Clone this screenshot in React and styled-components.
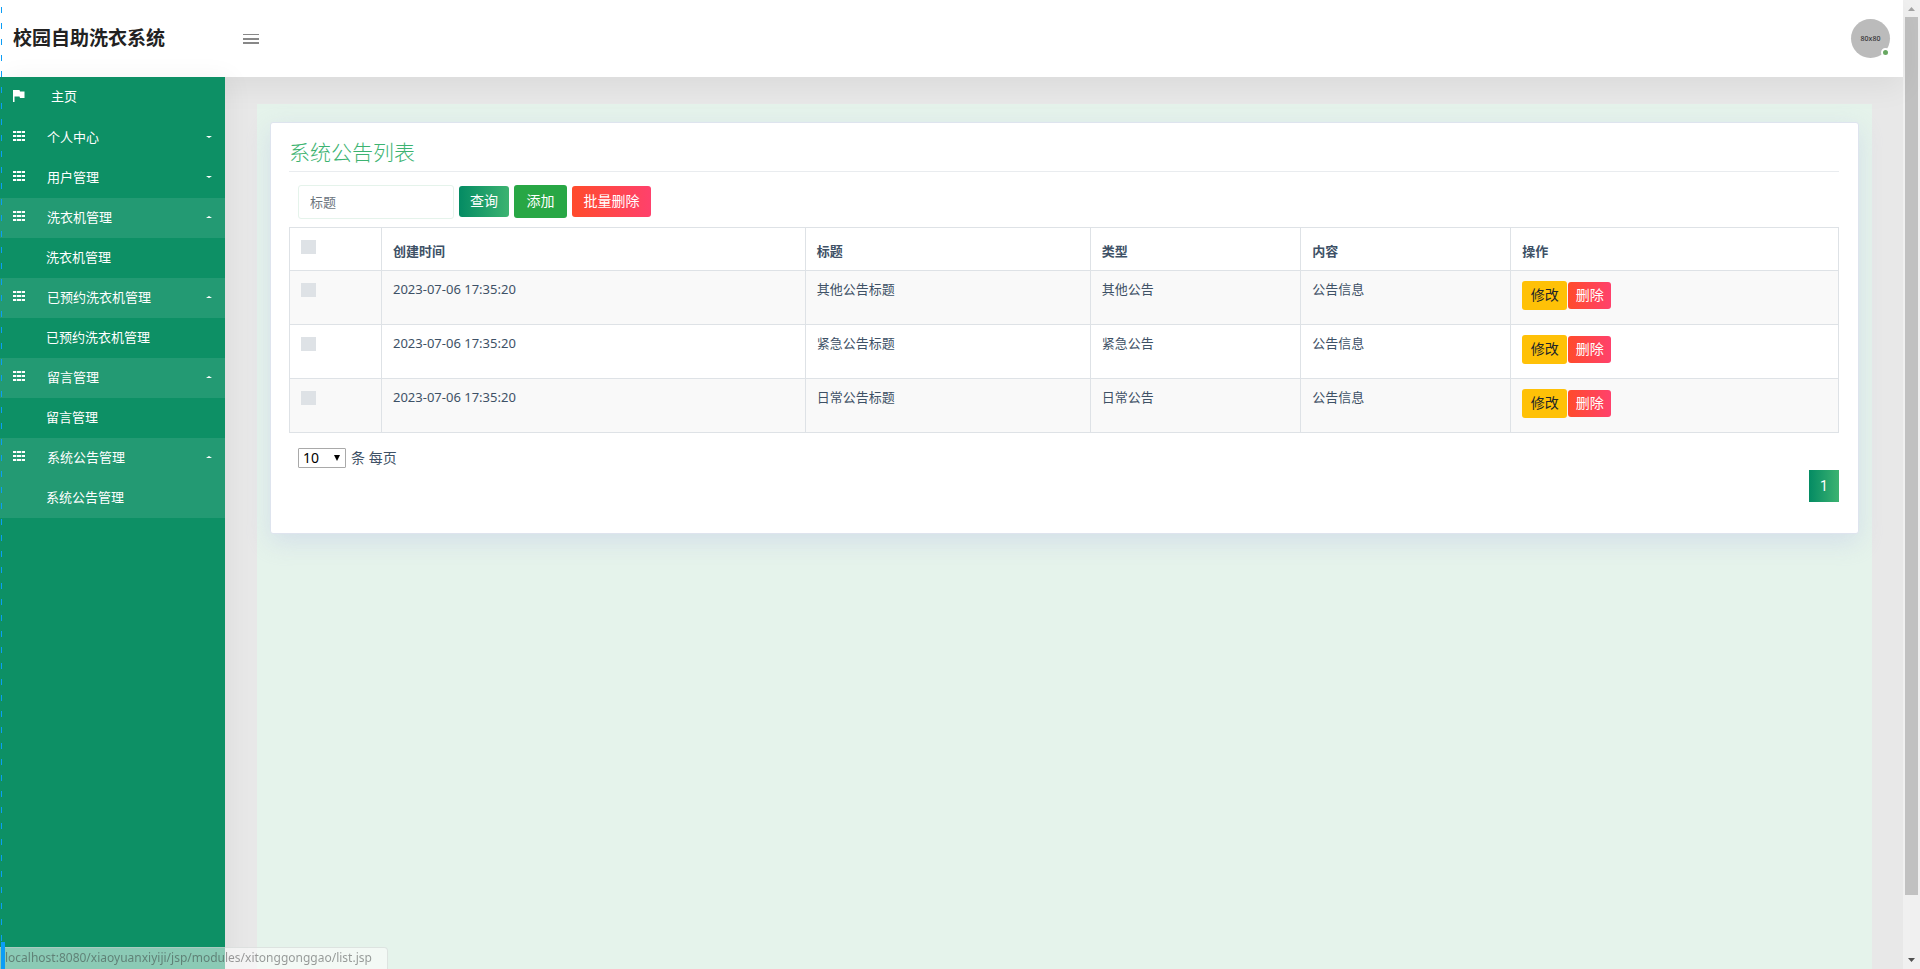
import React from "react";
import styled, { createGlobalStyle } from "styled-components";

const GlobalStyle = createGlobalStyle`
  *, *::before, *::after { box-sizing: border-box; }
  body {
    margin: 0;
    background: #e8e8e8;
    color: #3e5166;
    font: 13px/20px "Noto Sans", "Noto Sans CJK SC", sans-serif;
  }
  button, input, select { font-family: inherit; margin: 0; }
`;

const Window = styled.div`
  display: grid;
  grid-template-columns: minmax(0, 1fr) 17px;
  height: 100vh;
  overflow: hidden;
`;

const Page = styled.div`
  display: flex;
  flex-direction: column;
  min-height: 0;
`;

const Header = styled.header`
  display: flex;
  align-items: center;
  flex: none;
  height: 77px;
  padding: 0 13px;
  background: #fff;
  box-shadow: 0 10px 30px rgba(0, 0, 0, 0.06);
  position: relative;
  z-index: 1;
`;

const Brand = styled.h1`
  width: 230px;
  margin: 0;
  padding-bottom: 2px;
  color: #222;
  font-size: 19px;
  line-height: 28px;
  font-weight: 700;
`;

const MenuToggle = styled.button`
  display: flex;
  padding: 0;
  border: 0;
  background: none;
`;

const Avatar = styled.a`
  display: flex;
  align-items: center;
  justify-content: center;
  position: relative;
  width: 39px;
  height: 39px;
  margin-left: auto;
  border-radius: 50%;
  background: #bbb;
  color: #333;
  font-size: 7px;
  font-weight: 500;
  text-decoration: none;
`;

const Online = styled.span`
  position: absolute;
  right: 0;
  bottom: 1px;
  width: 9px;
  height: 9px;
  border: 2px solid #fff;
  border-radius: 50%;
  background: #67a761;
`;

const Body = styled.div`
  display: flex;
  flex: 1;
  min-height: 0;
`;

const Sidebar = styled.nav`
  flex: none;
  width: 225px;
  background: #0d9065;
  box-shadow: 5px 0 24px rgba(0, 0, 0, 0.05);
  position: relative;
  z-index: 2;
`;

const NavLink = styled.a`
  display: flex;
  align-items: center;
  height: ${(p) => (p.$home ? 41 : 40)}px;
  padding: 0 13px ${(p) => (p.$home ? 4 : 2)}px ${(p) => (p.$sub ? 46 : 13)}px;
  background: ${(p) => (p.$active ? "#239a73" : "transparent")};
  color: #fff;
  text-decoration: none;
`;

const NavIcon = styled.svg`
  flex: none;
  width: 12px;
  height: 12px;
  margin-right: ${(p) => (p.$home ? 26 : 22)}px;
  fill: #fff;
`;

const Caret = styled.span`
  margin-left: auto;
  border: 3px solid transparent;
  border-top: ${(p) => (p.$open ? "0" : "2px solid #fff")};
  border-bottom: ${(p) => (p.$open ? "2px solid #fff" : "0")};
`;

const Main = styled.main`
  flex: 1;
  min-width: 0;
  padding: 27px 31px 0 32px;
`;

const Panel = styled.div`
  height: 100%;
  padding: 18px 13px;
  background: #e5f3eb;
`;

const Card = styled.section`
  padding: 14px 19px 31px 18px;
  border: 1px solid #dee4ee;
  border-radius: 3px;
  background: #fff;
  box-shadow: 0 8px 24px rgba(190, 200, 230, 0.45);
`;

const Title = styled.h2`
  margin: 0 0 13px;
  padding-bottom: 4px;
  border-bottom: 1px solid #e9ecef;
  color: #3cb371;
  font-size: 21px;
  line-height: 30px;
  font-weight: 300;
`;

const Toolbar = styled.form`
  display: flex;
  align-items: center;
  gap: 5px;
  height: 33px;
  margin: 0 0 9px 9px;
`;

const SearchBox = styled.input`
  width: 156px;
  height: 34px;
  padding: 0 11px;
  border: 1px solid #e5f3eb;
  border-radius: 3px;
  font-size: 13px;
  line-height: 20px;
  outline: 0;
  &::placeholder { color: #6c757d; opacity: 1; }
`;

const fills = {
  query: "linear-gradient(90deg, #048b63, #3cb371)",
  add: "#28a745",
  danger: "linear-gradient(90deg, #ff4b2b, #ff416c)",
  edit: "#ffc107",
};

const sizes = {
  query: { width: 50, height: 31 },
  add: { width: 53, height: 33 },
  danger: { width: 79, height: 31 },
  edit: { width: 45, height: 29 },
  remove: { width: 43, height: 27 },
};

const Button = styled.button`
  min-width: ${(p) => sizes[p.$size || p.$kind].width}px;
  height: ${(p) => sizes[p.$size || p.$kind].height}px;
  padding: 0 7px 1px;
  border: 0;
  border-radius: 3px;
  background: ${(p) => fills[p.$kind]};
  color: ${(p) => (p.$kind === "edit" ? "#212529" : "#fff")};
  font-size: 14px;
  line-height: 20px;
`;

const Table = styled.table`
  width: 100%;
  border-collapse: collapse;
  table-layout: fixed;
  tbody tr:nth-child(odd) { background: #f9f9f9; }
`;

const Col = styled.col`
  width: ${(p) => p.$width}%;
`;

const HeadCell = styled.th`
  height: 43px;
  padding: 3px 11px 0;
  border: 1px solid #dee2e6;
  font-weight: 600;
  text-align: left;
`;

const Cell = styled.td`
  height: 54px;
  padding: 8px 11px 0;
  border: 1px solid #dee2e6;
  vertical-align: top;
`;

const Check = styled.input`
  appearance: none;
  display: block;
  width: 15px;
  height: 14px;
  margin-top: ${(p) => (p.$head ? "-8px" : "4px")};
  background: #dee2e6;
  &:checked { background: #0d9065; }
`;

const Actions = styled.div`
  display: flex;
  align-items: center;
  gap: 1px;
  margin-top: 2px;
`;

const PageSize = styled.div`
  display: flex;
  align-items: center;
  gap: 5px;
  margin: 15px 0 2px 9px;
  font-size: 14px;
`;

const SelectWrap = styled.span`
  position: relative;
  display: flex;
  svg {
    position: absolute;
    right: 6px;
    top: 7px;
    pointer-events: none;
  }
`;

const Select = styled.select`
  appearance: none;
  width: 48px;
  height: 20px;
  padding: 0 4px;
  border: 1px solid #a9a9a9;
  border-radius: 1px;
  background: #fff;
  color: #000;
  font-size: 14px;
  line-height: 18px;
`;

const Pager = styled.div`
  display: flex;
  justify-content: flex-end;
`;

const PageButton = styled.button`
  width: 30px;
  height: 32px;
  padding: 0 0 1px;
  border: 0;
  background: ${fills.query};
  color: #fff;
  font-size: 14px;
  font-family: Roboto, sans-serif;
`;

const ScrollTrack = styled.div`
  display: flex;
  flex-direction: column;
  align-items: center;
  background: #f0f0f0;
`;

const ScrollArrow = styled.svg`
  flex: none;
  width: 17px;
  height: 17px;
  fill: ${(p) => (p.$down ? "#505050" : "#a3a3a3")};
`;

const ScrollThumb = styled.div`
  width: 13px;
  height: 94%;
  flex: none;
  margin-bottom: auto;
  max-height: calc(100% - 91px);
  background: #c1c1c1;
`;

const Marker = styled.div`
  position: fixed;
  z-index: 4;
  left: 1px;
  top: 7px;
  bottom: 0;
  width: 1px;
  background: repeating-linear-gradient(#0b9df5 0 6px, transparent 6px 16px);
  pointer-events: none;
`;

const MarkerEnd = styled.div`
  position: fixed;
  z-index: 4;
  left: 1px;
  bottom: 0;
  width: 4px;
  height: 27px;
  background: #0b9df5;
`;

const StatusBar = styled.div`
  position: fixed;
  z-index: 3;
  left: 0;
  bottom: 0;
  height: 22px;
  padding: 0 15px 0 5px;
  border: solid rgba(200, 205, 203, 0.5);
  border-width: 1px 1px 0 0;
  border-top-right-radius: 4px;
  background: rgba(255, 255, 255, 0.52);
  color: rgba(50, 50, 50, 0.48);
  font-size: 12px;
  line-height: 20px;
`;

const nav = [
  { label: "个人中心" },
  { label: "用户管理" },
  { label: "洗衣机管理", open: true },
  { label: "已预约洗衣机管理", open: true },
  { label: "留言管理", open: true },
  { label: "系统公告管理", open: true, current: true },
];

const notices = ["其他公告", "紧急公告", "日常公告"];

function GridIcon() {
  return (
    <NavIcon viewBox="0 0 12 12" aria-hidden="true">
      {[0, 4, 8].map((y) => (
        <React.Fragment key={y}>
          <path d={`M0 ${y}h3v2H0zM4 ${y}h4v2H4zM9 ${y}h3v2H9z`} />
          <path d={`M3 ${y}h1v2H3zM8 ${y}h1v2H8z`} opacity="0.3" />
        </React.Fragment>
      ))}
    </NavIcon>
  );
}

export default function App() {
  return (
    <>
      <GlobalStyle />
      <Window>
        <Page>
          <Header>
            <Brand>校园自助洗衣系统</Brand>
            <MenuToggle type="button" aria-label="菜单">
              <svg width="16" height="12" viewBox="0 0 16 12" fill="#888">
                <rect y="1" width="16" height="1" />
                <rect y="5" width="16" height="2" />
                <rect y="9" width="16" height="2" />
              </svg>
            </MenuToggle>
            <Avatar href="#">
              80x80
              <Online />
            </Avatar>
          </Header>
          <Body>
            <Sidebar>
              <NavLink href="#" $home>
                <NavIcon $home viewBox="0 0 12 12" aria-hidden="true">
                  <path d="M0 0h6.5l.5 1.500h4.500V8H7L6.500 6.500H1.500V12H0z" />
                </NavIcon>
                主页
              </NavLink>
              {nav.map((item) => (
                <React.Fragment key={item.label}>
                  <NavLink href="#" $active={item.open}>
                    <GridIcon />
                    {item.label}
                    <Caret $open={item.open} />
                  </NavLink>
                  {item.open && (
                    <NavLink href="#" $sub $active={item.current}>
                      {item.label}
                    </NavLink>
                  )}
                </React.Fragment>
              ))}
            </Sidebar>
            <Main>
              <Panel>
                <Card>
                  <Title>系统公告列表</Title>
                  <Toolbar>
                    <SearchBox type="text" placeholder="标题" aria-label="标题" />
                    <Button type="button" $kind="query">查询</Button>
                    <Button type="button" $kind="add">添加</Button>
                    <Button type="button" $kind="danger">批量删除</Button>
                  </Toolbar>
                  <Table>
                    <colgroup>
                      <Col $width={5.94} />
                      <Col $width={27.35} />
                      <Col $width={18.41} />
                      <Col $width={13.59} />
                      <Col $width={13.55} />
                      <Col $width={21.16} />
                    </colgroup>
                    <thead>
                      <tr>
                        <HeadCell>
                          <Check type="checkbox" aria-label="全选" $head />
                        </HeadCell>
                        {["创建时间", "标题", "类型", "内容", "操作"].map((h) => (
                          <HeadCell key={h}>{h}</HeadCell>
                        ))}
                      </tr>
                    </thead>
                    <tbody>
                      {notices.map((type) => (
                        <tr key={type}>
                          <Cell>
                            <Check type="checkbox" aria-label={type} />
                          </Cell>
                          <Cell>2023-07-06 17:35:20</Cell>
                          <Cell>{type}标题</Cell>
                          <Cell>{type}</Cell>
                          <Cell>公告信息</Cell>
                          <Cell>
                            <Actions>
                              <Button type="button" $kind="edit">修改</Button>
                              <Button type="button" $kind="danger" $size="remove">删除</Button>
                            </Actions>
                          </Cell>
                        </tr>
                      ))}
                    </tbody>
                  </Table>
                  <PageSize>
                    <SelectWrap>
                      <Select id="page-size" defaultValue="10">
                        <option>10</option>
                        <option>25</option>
                        <option>50</option>
                      </Select>
                      <svg width="6" height="6" viewBox="0 0 6 6" aria-hidden="true">
                        <path d="M0 0h6L3 6z" />
                      </svg>
                    </SelectWrap>
                    <label htmlFor="page-size">条 每页</label>
                  </PageSize>
                  <Pager>
                    <PageButton type="button">1</PageButton>
                  </Pager>
                </Card>
              </Panel>
            </Main>
          </Body>
        </Page>
        <ScrollTrack aria-hidden="true">
          <ScrollArrow viewBox="0 0 17 17">
            <path d="M5 11h7L8.500 7z" />
          </ScrollArrow>
          <ScrollThumb />
          <ScrollArrow $down viewBox="0 0 17 17">
            <path d="M5 6h7L8.500 10z" />
          </ScrollArrow>
        </ScrollTrack>
      </Window>
      <StatusBar>localhost:8080/xiaoyuanxiyiji/jsp/modules/xitonggonggao/list.jsp</StatusBar>
      <Marker />
      <MarkerEnd />
    </>
  );
}
